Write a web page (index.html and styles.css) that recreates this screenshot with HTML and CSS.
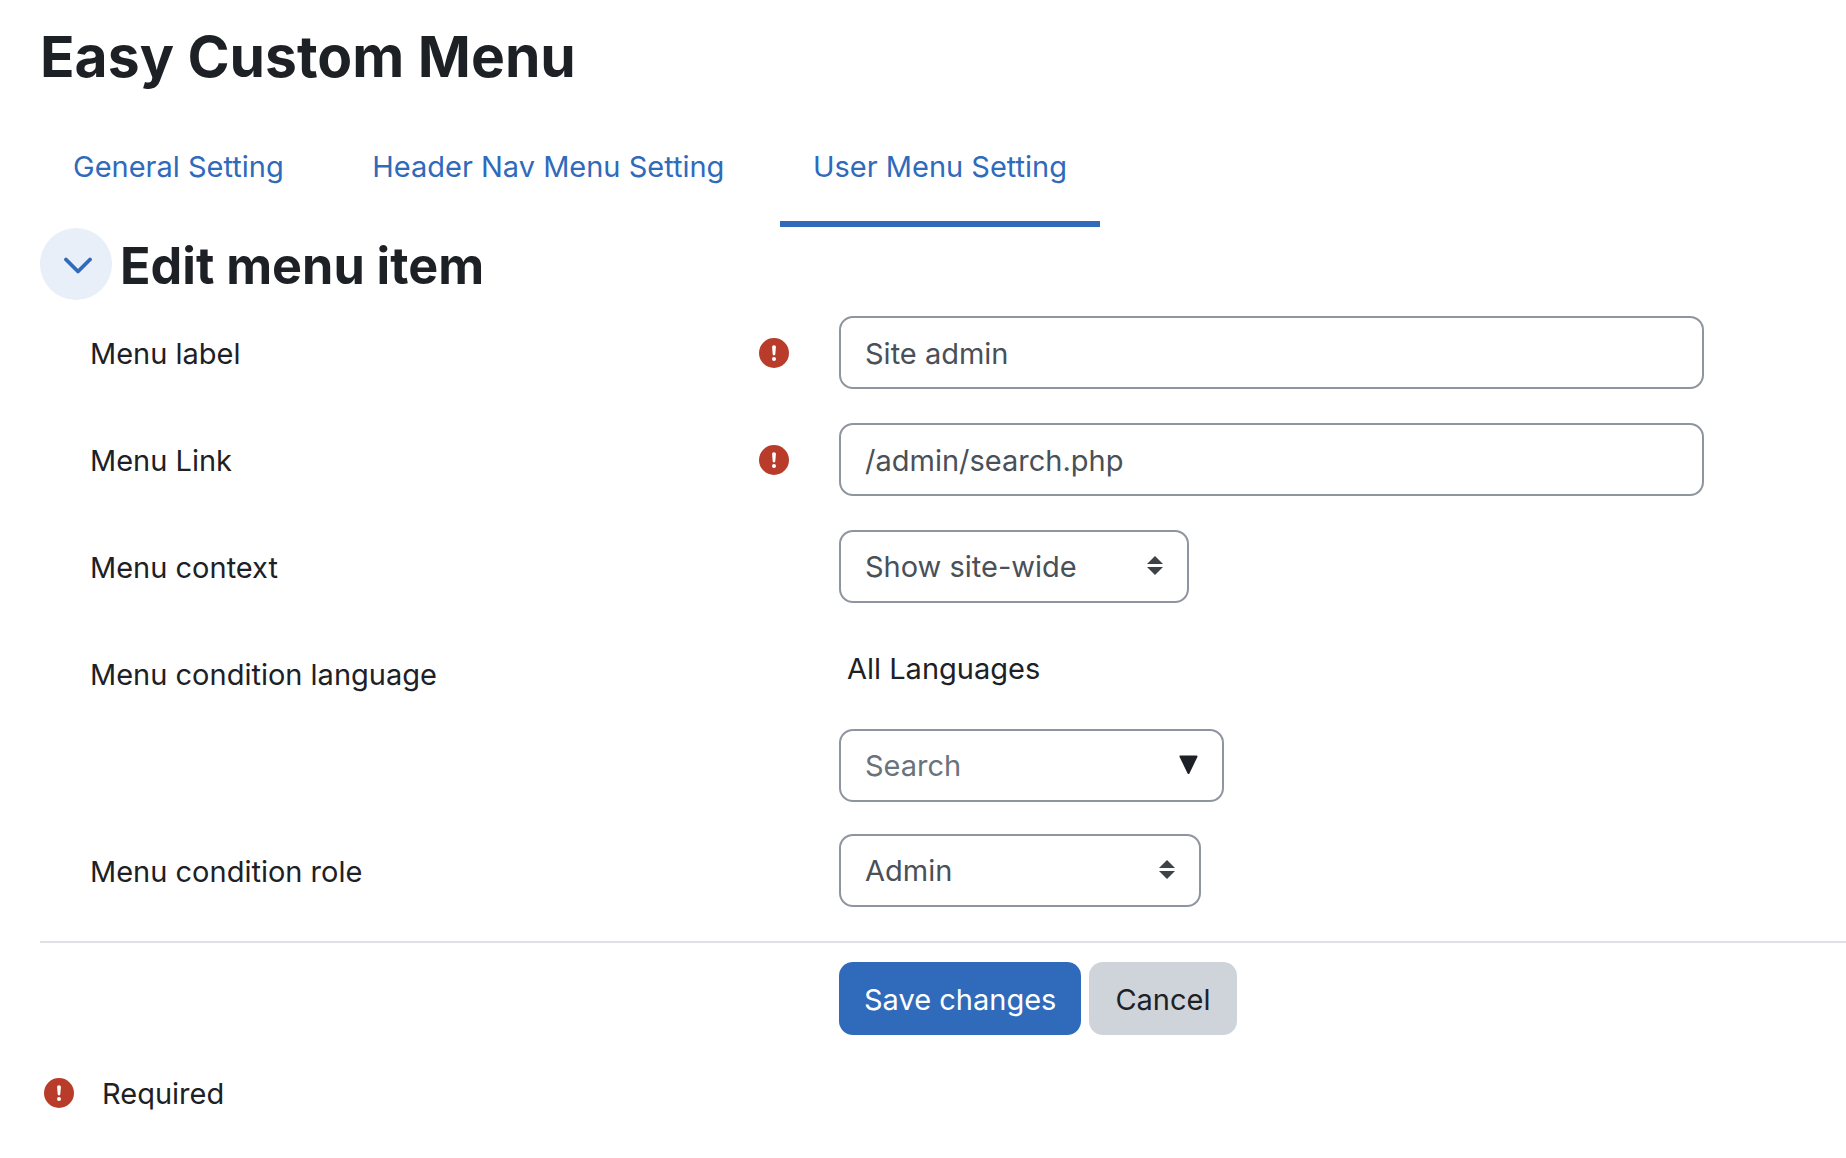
FILE: index.html
```html
<!DOCTYPE html>
<html>
  <head>
    <title>Easy Custom Menu</title>
    <meta charset="utf-8" />
    <link rel="stylesheet" href="styles.css">
  </head>
  <body>
    <svg class="defs" width="0" height="0">
      <symbol id="required" viewBox="0 0 30 30">
        <circle cx="15" cy="15" r="15" fill="#b93c2a" />
        <path d="M15 7.200c1.200 0 2 .9 1.900 2l-.6 7c-.1.700-.6 1.200-1.300 1.200s-1.200-.5-1.300-1.200l-.6-7c-.1-1.100.7-2 1.900-2z" fill="#fff" />
        <circle cx="15" cy="21" r="2" fill="#fff" />
      </symbol>
      <symbol id="updown" viewBox="0 0 16 20">
        <path d="M8 0l8 8H0zM0 11h16l-8 8z" fill="#3c4248" />
      </symbol>
    </svg>

    <h1 class="page-title">Easy Custom Menu</h1>

    <ul class="tabs">
      <li class="tab"><a href="#">General Setting</a></li>
      <li class="tab"><a href="#">Header Nav Menu Setting</a></li>
      <li class="tab active"><a href="#">User Menu Setting</a></li>
    </ul>

    <form>
      <div class="section-head">
        <span class="collapse-btn">
          <svg width="28" height="17" viewBox="0 0 28 17"><path d="M2 2.500l12 12 12-12" fill="none" stroke="#2f6abb" stroke-width="3.800" stroke-linecap="round" stroke-linejoin="round" /></svg>
        </span>
        <h2 class="section-title">Edit menu item</h2>
      </div>

      <div class="fields">
        <div class="row">
          <label class="label">Menu label</label>
          <span class="req"><svg class="req-icon"><use href="#required" /></svg></span>
          <div class="control"><input class="field wide" type="text" value="Site admin" /></div>
        </div>
        <div class="row">
          <label class="label">Menu Link</label>
          <span class="req"><svg class="req-icon"><use href="#required" /></svg></span>
          <div class="control"><input class="field wide" type="text" value="/admin/search.php" /></div>
        </div>
        <div class="row">
          <label class="label">Menu context</label>
          <span class="req"></span>
          <div class="control">
            <div class="field select context"><span class="value">Show site-wide</span> <svg class="updown"><use href="#updown" /></svg></div>
          </div>
        </div>
        <div class="row lang">
          <label class="label">Menu condition language</label>
          <span class="req"></span>
          <div class="control">
            <div class="tag">All Languages</div>
            <div class="field select search">
              <span class="value placeholder">Search</span>
              <svg class="caret" width="19" height="20" viewBox="0 0 19 20"><path d="M1.500 1.500h16L9.500 18z" fill="#1d2125" stroke="#1d2125" stroke-width="2" stroke-linejoin="round" /></svg>
            </div>
          </div>
        </div>
        <div class="row">
          <label class="label">Menu condition role</label>
          <span class="req"></span>
          <div class="control">
            <div class="field select role"><span class="value">Admin</span> <svg class="updown"><use href="#updown" /></svg></div>
          </div>
        </div>
      </div>

      <div class="actions">
        <button class="btn primary" type="button">Save changes</button>
        <button class="btn secondary" type="button">Cancel</button>
      </div>

      <div class="legend">
        <svg class="req-icon"><use href="#required" /></svg>
        <span>Required</span>
      </div>
    </form>
  </body>
</html>
```

FILE: styles.css
```css
* {
  box-sizing: border-box;
}

body {
  margin: 0;
  padding: 0 0 0 40px;
  font-family: Inter, "Liberation Sans", sans-serif;
  font-size: 29px;
  line-height: 1.5;
  color: #1d2125;
  background: #fff;
}

.defs {
  display: block;
}

.page-title {
  margin: 21px 0 0;
  font-size: 57px;
  line-height: 72px;
  font-weight: 700;
}

.tabs {
  display: flex;
  gap: 22.500px;
  margin: 36px 0 0;
  padding: 0;
  list-style: none;
}

.tab {
  padding: 16px 33px 32px;
  border-bottom: 6px solid transparent;
}

.tab a {
  color: #2f6abb;
  text-decoration: none;
}

.tab.active {
  border-bottom-color: #2f6abb;
}

.section-head {
  display: flex;
  align-items: center;
  gap: 8px;
  padding-top: 1px;
}

.collapse-btn {
  display: flex;
  align-items: center;
  justify-content: center;
  width: 72px;
  height: 72px;
  padding: 4px 0 0 4px;
  border-radius: 50%;
  background: #e9eff8;
}

.section-title {
  margin: 0;
  padding-top: 3px;
  font-size: 50.300px;
  line-height: 69px;
  font-weight: 700;
}

.fields {
  padding: 16px 0 34px;
  border-bottom: 2px solid #dee2e6;
}

.row {
  display: flex;
  align-items: center;
  margin-bottom: 34px;
}

.row:last-child {
  margin-bottom: 0;
}

.row.lang {
  align-items: flex-start;
  margin-bottom: 32px;
}

.row.lang .label {
  padding-top: 16px;
}

.label {
  width: 719px;
  padding: 3px 0 0 50px;
}

.req {
  display: flex;
  align-items: center;
  width: 80px;
  padding-top: 1px;
}

.req-icon {
  display: block;
  width: 30px;
  height: 30px;
}

.field {
  display: flex;
  align-items: center;
  height: 73px;
  padding: 2px 24px 0;
  border: 2px solid #8f959e;
  border-radius: 14px;
  font: inherit;
  color: #495057;
  background: #fff;
}

.wide {
  width: 865px;
}

.select {
  justify-content: space-between;
  padding-top: 0;
}

.select .value {
  padding-top: 2px;
}

.context {
  width: 350px;
}

.search {
  width: 385px;
}

.role {
  width: 362px;
}

.updown {
  width: 16px;
  height: 20px;
}

.placeholder {
  color: #6a737b;
}

.tag {
  height: 92px;
  padding: 10px 0 0 8px;
  color: #1d2125;
}

.actions {
  display: flex;
  gap: 8px;
  margin: 19px 0 0 799px;
}

.btn {
  height: 73px;
  padding: 3px 25px 0;
  border: 0;
  border-radius: 14px;
  font: inherit;
}

.primary {
  color: #fff;
  background: #2f6abb;
}

.secondary {
  padding: 3px 26px 0;
  color: #1d2125;
  background: #ced4da;
}

.legend {
  display: flex;
  align-items: center;
  gap: 28px;
  margin: 37px 0 0 4px;
}
```
